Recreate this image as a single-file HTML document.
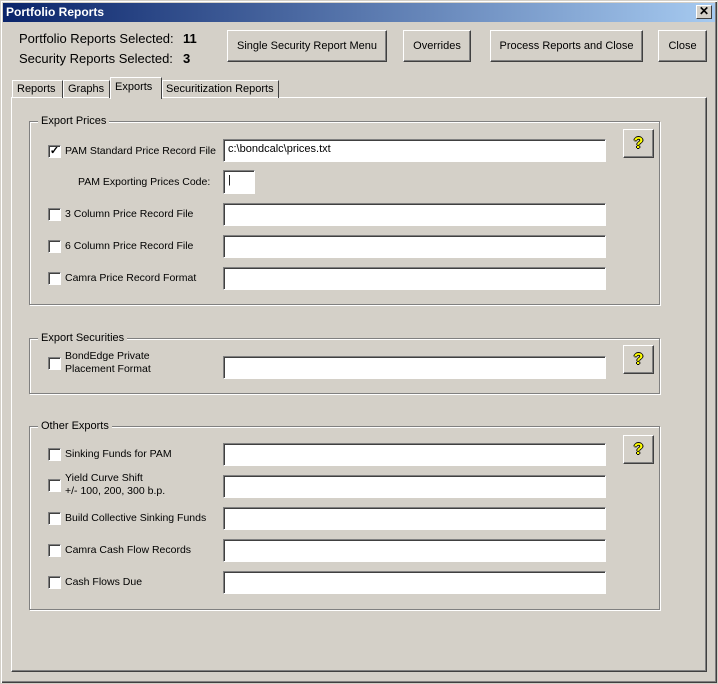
<!DOCTYPE html><html><head><style>
*{box-sizing:border-box;margin:0;padding:0}
body{width:718px;height:684px;background:#d4d0c8;font-family:"Liberation Sans",sans-serif;font-size:10.5px;color:#000;position:relative;overflow:hidden}
.a{position:absolute;white-space:nowrap}
.win{left:0;top:0;width:718px;height:684px;border:1px solid #d4d0c8;box-shadow:inset 1px 1px 0 #fff,inset -1px -1px 0 #404040,inset -2px -2px 0 #808080}
.title{left:3px;top:3px;width:712px;height:19px;background:linear-gradient(to right,#0a246a,#a6caf0);color:#fff;font-weight:bold;font-size:12px;padding:2px 0 0 3px}
.x{left:696px;top:5px;width:16px;height:14px;background:#d4d0c8;border:1px solid;border-color:#fff #404040 #404040 #fff;font-size:12px;line-height:11px;text-align:center;font-weight:bold;color:#000}
.btn{border:1px solid;border-color:#fff #404040 #404040 #fff;box-shadow:inset -1px -1px 0 #808080;text-align:center;font-size:11px;display:flex;align-items:center;justify-content:center}
.tb{background:#fff;border:1px solid;border-color:#808080 #fff #fff #808080;box-shadow:inset 1px 1px 0 #404040;padding:3px 0 0 4px;font-size:11px}
.grp{border:1px solid #808080;box-shadow:1px 1px 0 #fff,inset 1px 1px 0 #fff}
.gl{background:#d4d0c8;padding:0 3px;font-size:11px}
.cb{width:13px;height:13px;background:#fff;border:1px solid;border-color:#808080 #fff #fff #808080;box-shadow:inset 1px 1px 0 #404040;font-size:11px;line-height:11px;text-align:center;font-weight:bold}
.tab{top:80px;height:18px;border:1px solid;border-bottom:none;border-color:#fff #404040 #404040 #fff;padding:2px 4px 0;font-size:11px}
.q{color:#ff0;font-weight:bold;font-size:16px;text-shadow:1px 0 #000,-1px 0 #000,0 1px #000,0 -1px #000}
</style></head><body>
<div class="a win"></div>
<div class="a title">Portfolio Reports</div>
<div class="a x">✕</div>
<div class="a" style="left:19px;top:31px;font-size:13px">Portfolio Reports Selected:</div>
<div class="a" style="left:183px;top:31px;font-size:13px;font-weight:bold">11</div>
<div class="a" style="left:19px;top:51px;font-size:13px">Security Reports Selected:</div>
<div class="a" style="left:183px;top:51px;font-size:13px;font-weight:bold">3</div>
<div class="a btn" style="left:227px;top:30px;width:160px;height:32px">Single Security Report Menu</div>
<div class="a btn" style="left:403px;top:30px;width:68px;height:32px">Overrides</div>
<div class="a btn" style="left:490px;top:30px;width:153px;height:32px">Process Reports and Close</div>
<div class="a btn" style="left:658px;top:30px;width:49px;height:32px">Close</div>
<div class="a" style="left:11px;top:97px;width:696px;height:575px;border:1px solid;border-color:#fff #404040 #404040 #fff;box-shadow:inset -1px -1px 0 #808080"></div>
<div class="a tab" style="left:12px;width:51px">Reports</div>
<div class="a tab" style="left:63px;width:47px">Graphs</div>
<div class="a tab" style="left:162px;width:117px;padding-left:3px">Securitization Reports</div>
<div class="a tab" style="left:110px;top:77px;width:52px;height:22px;background:#d4d0c8;padding-top:3px">Exports</div>

<div class="a grp" style="left:29px;top:121px;width:631px;height:184px"></div>
<div class="a gl" style="left:38px;top:115px">Export Prices</div>
<div class="a grp" style="left:29px;top:338px;width:631px;height:56px"></div>
<div class="a gl" style="left:38px;top:332px">Export Securities</div>
<div class="a grp" style="left:29px;top:426px;width:631px;height:184px"></div>
<div class="a gl" style="left:38px;top:420px">Other Exports</div>

<div class="a btn q" style="left:623px;top:129px;width:31px;height:29px">?</div>
<div class="a btn q" style="left:623px;top:345px;width:31px;height:29px">?</div>
<div class="a btn q" style="left:623px;top:435px;width:31px;height:29px">?</div>

<div class="a cb" style="left:48px;top:145px">✓</div><div class="a" style="left:65px;top:145px">PAM Standard Price Record File</div>
<div class="a tb" style="left:223px;top:139px;width:383px;height:23px">c:\bondcalc\prices.txt</div>
<div class="a" style="left:78px;top:176px">PAM Exporting Prices Code:</div>
<div class="a tb" style="left:223px;top:170px;width:32px;height:24px">|</div>

<div class="a cb" style="left:48px;top:208px"></div><div class="a" style="left:65px;top:208px">3 Column Price Record File</div>
<div class="a tb" style="left:223px;top:203px;width:383px;height:23px"></div>
<div class="a cb" style="left:48px;top:240px"></div><div class="a" style="left:65px;top:240px">6 Column Price Record File</div>
<div class="a tb" style="left:223px;top:235px;width:383px;height:23px"></div>
<div class="a cb" style="left:48px;top:272px"></div><div class="a" style="left:65px;top:272px">Camra Price Record Format</div>
<div class="a tb" style="left:223px;top:267px;width:383px;height:23px"></div>

<div class="a cb" style="left:48px;top:357px"></div><div class="a" style="left:65px;top:350px;line-height:13px">BondEdge Private<br>Placement Format</div>
<div class="a tb" style="left:223px;top:356px;width:383px;height:23px"></div>

<div class="a cb" style="left:48px;top:448px"></div><div class="a" style="left:65px;top:448px">Sinking Funds for PAM</div>
<div class="a tb" style="left:223px;top:443px;width:383px;height:23px"></div>
<div class="a cb" style="left:48px;top:479px"></div><div class="a" style="left:65px;top:472px;line-height:13px">Yield Curve Shift<br>+/- 100, 200, 300 b.p.</div>
<div class="a tb" style="left:223px;top:475px;width:383px;height:23px"></div>
<div class="a cb" style="left:48px;top:512px"></div><div class="a" style="left:65px;top:512px">Build Collective Sinking Funds</div>
<div class="a tb" style="left:223px;top:507px;width:383px;height:23px"></div>
<div class="a cb" style="left:48px;top:544px"></div><div class="a" style="left:65px;top:544px">Camra Cash Flow Records</div>
<div class="a tb" style="left:223px;top:539px;width:383px;height:23px"></div>
<div class="a cb" style="left:48px;top:576px"></div><div class="a" style="left:65px;top:576px">Cash Flows Due</div>
<div class="a tb" style="left:223px;top:571px;width:383px;height:23px"></div>
</body></html>
